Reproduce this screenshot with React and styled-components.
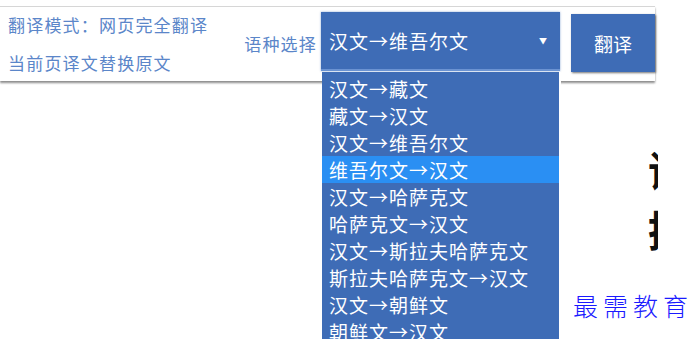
import styled, { createGlobalStyle } from "styled-components";

const GlobalStyle = createGlobalStyle`
    html, body {
        margin: 0;
        padding: 0;
        background: #fff;
    }
    body {
        font-family: "Microsoft YaHei", "Noto Sans CJK SC", "Noto Sans", sans-serif;
    }
`;

const languages = [
    "汉文→藏文",
    "藏文→汉文",
    "汉文→维吾尔文",
    "维吾尔文→汉文",
    "汉文→哈萨克文",
    "哈萨克文→汉文",
    "汉文→斯拉夫哈萨克文",
    "斯拉夫哈萨克文→汉文",
    "汉文→朝鲜文",
    "朝鲜文→汉文",
];

const App = () => {
    return (
        <Page>
            <GlobalStyle />
            <Toolbar>
                <ModeBlock>
                    <ModeText>翻译模式：网页完全翻译</ModeText>
                    <ModeText>当前页译文替换原文</ModeText>
                </ModeBlock>
                <Label>语种选择</Label>
                <SelectWrap>
                    <SelectBox>
                        <span>汉文→维吾尔文</span>
                        <Caret>▼</Caret>
                    </SelectBox>
                    <Options>
                        {languages.map((lang) => (
                            <Option key={lang} $active={lang === "维吾尔文→汉文"}>
                                {lang}
                            </Option>
                        ))}
                    </Options>
                </SelectWrap>
                <TranslateButton>翻译</TranslateButton>
            </Toolbar>
            <Content>
                <BigChars>
                    <BigChar>评</BigChar>
                    <BigChar>提</BigChar>
                </BigChars>
            </Content>
            <Watermark>最需教育</Watermark>
        </Page>
    );
};

const Page = styled.div`
    position: relative;
    width: 696px;
    height: 339px;
    overflow: hidden;
    background: #fff;
`;

const Toolbar = styled.div`
    display: flex;
    align-items: flex-start;
    box-sizing: border-box;
    width: 655px;
    height: 75px;
    margin-top: 6px;
    background: #fff;
    border-top: 1px solid #d6d6d6;
    box-shadow: 0 2px 2px rgba(0, 0, 0, 0.45);
    position: relative;
    z-index: 2;
`;

const ModeBlock = styled.div`
    display: flex;
    flex-direction: column;
    gap: 16px;
    padding: 7px 0 0 8px;
    flex-shrink: 0;
`;

const ModeText = styled.div`
    font-size: 17px;
    letter-spacing: 1.2px;
    line-height: 22px;
    color: #5b86c9;
    white-space: nowrap;
`;

const Label = styled(ModeText)`
    margin-left: 36px;
    margin-top: 26px;
    flex-shrink: 0;
`;

const SelectWrap = styled.div`
    position: relative;
    flex-shrink: 0;
    width: 239px;
    height: 59px;
    margin-left: 4px;
    margin-top: 5px;
`;

const SelectBox = styled.div`
    display: flex;
    align-items: center;
    justify-content: space-between;
    box-sizing: border-box;
    height: 100%;
    padding: 0 12px 0 8px;
    background: #3e6cb6;
    border-bottom: 2px solid #6b93d2;
    color: #fff;
    font-size: 19px;
    letter-spacing: 1px;
    box-shadow: 0 0 2px rgba(62, 108, 182, 0.6);
`;

const Caret = styled.span`
    font-size: 8px;
    color: #fff;
`;

const Options = styled.div`
    position: absolute;
    top: 60px;
    left: 1px;
    width: 237px;
    padding-top: 3px;
    background: #3e6cb6;
    border-right: 2px solid #fff;
`;

const Option = styled.div`
    height: 27px;
    line-height: 27px;
    padding-left: 7px;
    font-size: 19px;
    letter-spacing: 1px;
    color: #fff;
    white-space: nowrap;
    background: ${(p) => (p.$active ? "#2a8ff3" : "transparent")};
`;

const TranslateButton = styled.div`
    display: flex;
    align-items: center;
    justify-content: center;
    flex-shrink: 0;
    width: 84px;
    height: 58px;
    margin-left: 11px;
    margin-top: 7px;
    background: #3e6cb6;
    color: #fff;
    font-size: 19px;
    box-shadow: 1px 1px 2px rgba(0, 0, 0, 0.55);
`;

const Content = styled.div`
    display: flex;
    justify-content: flex-end;
    width: 658px;
    overflow: hidden;
    padding-top: 58px;
`;

const BigChars = styled.div`
    display: flex;
    flex-direction: column;
    margin-right: -32px;
`;

const BigChar = styled.div`
    font-size: 42px;
    font-weight: 700;
    line-height: 60px;
    color: #111;
`;

const Watermark = styled.div`
    position: absolute;
    right: 3px;
    bottom: 16px;
    font-family: "Noto Sans CJK SC", serif;
    font-weight: 300;
    font-size: 25px;
    letter-spacing: 5px;
    color: #1a1aff;
`;

export default App;
